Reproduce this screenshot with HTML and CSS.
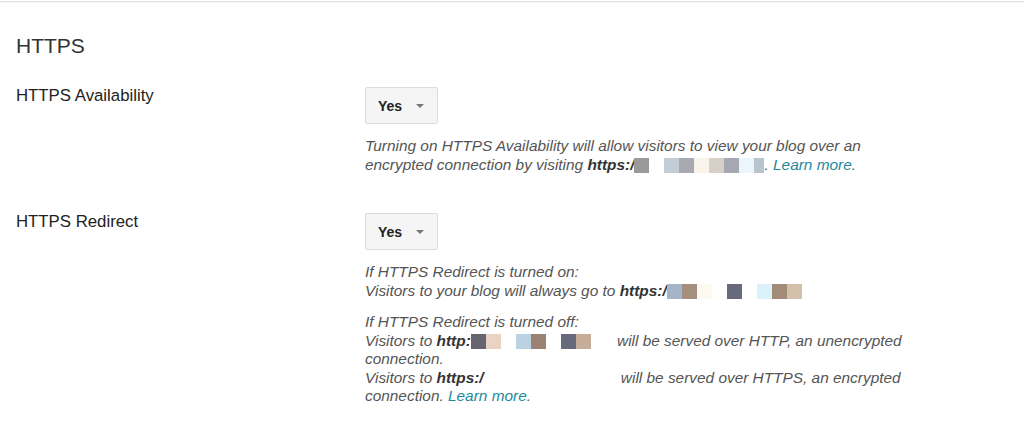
FILE: index.html
```html
<!DOCTYPE html>
<html lang="en">
  <head>
    <meta charset="UTF-8" />
    <meta name="viewport" content="width=device-width, initial-scale=1.0" />
    <title>Settings - HTTPS</title>
    <link rel="stylesheet" href="styles.css">
  </head>
  <body>
    <div class="topline"></div>
    <div class="section">
      <h2>HTTPS</h2>

      <div class="row">
        <div class="label">HTTPS Availability</div>
        <div class="field">
          <button class="select">Yes <span class="caret"></span></button>
          <div class="desc">
            <p>
              Turning on HTTPS Availability will allow visitors to view your blog over an
              encrypted connection by visiting <b>https:/</b><span class="redact"><i class="px c1"></i><i class="px"></i><i class="px c2"></i><i class="px c3"></i><i class="px c4"></i><i class="px c5"></i><i class="px c6"></i><i class="px c7"></i><i class="px c8 half"></i></span>. <a href="#">Learn more</a>.
            </p>
          </div>
        </div>
      </div>

      <div class="row">
        <div class="label">HTTPS Redirect</div>
        <div class="field">
          <button class="select">Yes <span class="caret"></span></button>
          <div class="desc">
            <p>
              If HTTPS Redirect is turned on:<br>
              Visitors to your blog will always go to <b>https:/</b><span class="redact"><i class="px c9"></i><i class="px c10"></i><i class="px c11"></i><i class="px"></i><i class="px c12"></i><i class="px"></i><i class="px c13"></i><i class="px c14"></i><i class="px c15"></i></span>
            </p>
            <p>
              If HTTPS Redirect is turned off:<br>
              Visitors to <b>http:</b><span class="redact"><i class="px c16"></i><i class="px c17"></i><i class="px"></i><i class="px c18"></i><i class="px c19"></i><i class="px"></i><i class="px c12"></i><i class="px c20"></i><i class="px wide"></i></span> will be served over HTTP, an unencrypted connection.<br>
              Visitors to <b>https:/</b><span class="redact"><i class="px blank"></i></span> will be served over HTTPS, an encrypted connection. <a href="#">Learn more</a>.
            </p>
          </div>
        </div>
      </div>
    </div>
  </body>
</html>
```

FILE: styles.css
```css
body {
  margin: 0;
  font-family: "Liberation Sans", Arial, sans-serif;
  color: #222;
  background: #fff;
}
.topline {
  height: 1px;
  background: #e4e4e4;
  box-shadow: 0 1px 1px rgba(0, 0, 0, 0.05);
  margin-top: 1px;
}
.section {
  padding: 0 16px;
}
h2 {
  font-size: 21px;
  line-height: 24px;
  font-weight: normal;
  color: #333;
  margin: 32px 0 28px;
}
.row {
  display: grid;
  grid-template-columns: 349px 1fr;
  margin-bottom: 38px;
}
.label {
  font-size: 16.8px;
  line-height: 20px;
  color: #222;
}
.select {
  display: inline-flex;
  align-items: center;
  gap: 14px;
  height: 37px;
  margin-top: 1px;
  padding: 0 13px 0 12px;
  border: 1px solid #dcdcdc;
  border-radius: 2px;
  background: #f5f5f5;
  color: #222;
  font-family: inherit;
  font-size: 14px;
  font-weight: bold;
}
.caret {
  width: 0;
  height: 0;
  border-left: 4px solid transparent;
  border-right: 4px solid transparent;
  border-top: 4px solid #777;
}
.desc {
  margin-top: 13px;
  width: 545px;
  font-size: 15.4px;
  line-height: 18.5px;
  font-style: italic;
  color: #555;
}
.desc p {
  margin: 0 0 13px;
}
.desc p:last-child {
  margin-bottom: 0;
}
.desc b {
  color: #333;
}
.desc a {
  color: #1f8a9b;
  text-decoration: none;
}
.redact {
  display: inline-flex;
  vertical-align: -3px;
}
.px {
  display: block;
  width: 15px;
  height: 15px;
}
.px.half { width: 10px; }
.px.wide { width: 22px; }
.px.blank { width: 133px; }
.c1 { background: #9a9a9a; }
.c2 { background: #c3cdd6; }
.c3 { background: #a9a9b1; }
.c4 { background: #fbf4ea; }
.c5 { background: #d6d0c9; }
.c6 { background: #a5a8b2; }
.c7 { background: #eaf5fc; }
.c8 { background: #b9c5cd; }
.c9 { background: #a5b5c8; }
.c10 { background: #a48e7e; }
.c11 { background: #fdf8f0; }
.c12 { background: #676a7c; }
.c13 { background: #dcf2fb; }
.c14 { background: #a38b79; }
.c15 { background: #d2c0a8; }
.c16 { background: #676470; }
.c17 { background: #e9d3c3; }
.c18 { background: #bad2e2; }
.c19 { background: #9a8272; }
.c20 { background: #c5ad9a; }
```
